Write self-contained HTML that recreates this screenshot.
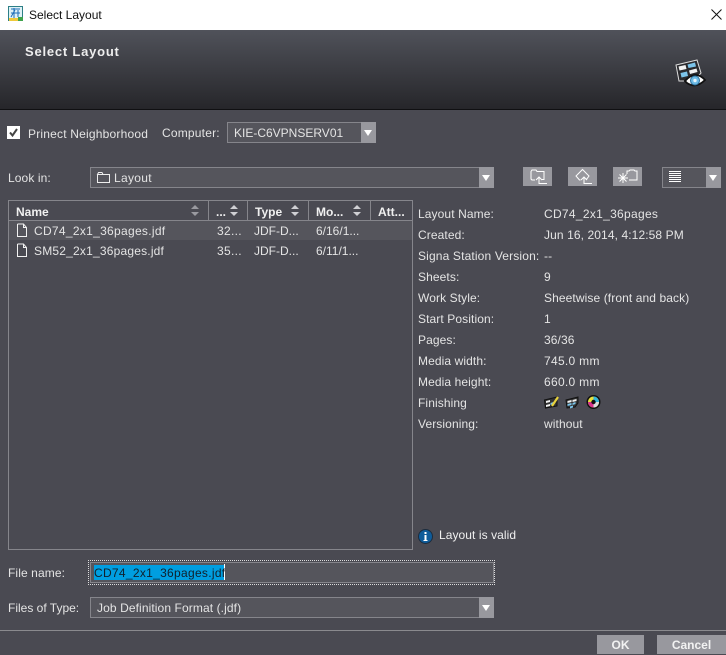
<!DOCTYPE html>
<html><head><meta charset="utf-8">
<style>
html,body{margin:0;padding:0}
body{width:726px;height:654px;position:relative;overflow:hidden;background:#4a4a52;font-family:"Liberation Sans",sans-serif;font-size:12px;color:#e4e4e4;letter-spacing:.1px}
.a{position:absolute;white-space:nowrap;line-height:14px}
.b{position:absolute;box-sizing:border-box}
.l{letter-spacing:.3px}
.box{position:absolute;box-sizing:border-box;background:#55555c;border:1px solid #85858b}
.arr{position:absolute;background:#98989e;width:15px}
.arr:after{content:"";position:absolute;left:3px;top:50%;margin-top:-3px;border-left:4.5px solid transparent;border-right:4.5px solid transparent;border-top:6px solid #fff}
.tb{position:absolute;top:167px;width:29px;height:19px;background:#98989e}
.tb svg{position:absolute;left:0;top:0}
.h{font-weight:bold;color:#f0f0f0;letter-spacing:0}
.sort{position:absolute;top:203px;width:10px;height:15px}
.dv{position:absolute;top:201px;width:1px;height:19px;background:#85858b}
</style></head><body>

<div class="b" style="left:0;top:0;width:726px;height:30px;background:#fff"></div>
<svg class="b" style="left:8px;top:6px" width="16" height="16" viewBox="0 0 16 16"><rect x=".5" y=".5" width="14" height="14" fill="#dff2f6" stroke="#2d7f86"/><rect x="1" y="12" width="9" height="3" fill="#f0c93a"/><rect x="10" y="11" width="5" height="4" fill="#3fa34d"/><path d="M3 3h9M3 7h9M6 2v10M10 4v7M3 11l4-7" stroke="#1f6fb8" fill="none"/></svg>
<div class="a" style="left:29px;top:8px;color:#111;letter-spacing:0">Select Layout</div>
<svg class="b" style="left:711px;top:9px" width="11" height="11" viewBox="0 0 11 11"><path d="M.5.5l10 10M10.500.5l-10 10" stroke="#111" fill="none"/></svg>

<div class="b" style="left:0;top:30px;width:726px;height:79px;background:linear-gradient(#50525a,#26262a)"></div>
<div class="b" style="left:0;top:109px;width:726px;height:1px;background:#101012"></div>
<div class="a" style="left:25px;top:45px;font-weight:bold;font-size:13px;letter-spacing:.78px;color:#eee">Select Layout</div>
<svg class="b" style="left:673px;top:57px" width="34" height="32" viewBox="0 0 34 32">
<path d="M3 8L24 3 28 16 21 24 6 24z" fill="#2a2a2e" stroke="#ddd" stroke-width="1"/>
<path d="M5.500 9.500L12.500 8 13.500 12 6.500 13.500zM16 13.500L23.500 11.500 24.500 15 17 17z" fill="#f2f2f2"/>
<path d="M14.500 7.500L22 5.500 23 9.500 15.500 11zM7.500 16L14 14.500 15 19 8.500 20.500z" fill="#7cc4ea"/>
<path d="M12 24q9-10 18-3 2 2 2 2-9 9-18 3z" fill="#fff" stroke="#111" stroke-width="1.800"/>
<circle cx="22" cy="23.500" r="4.500" fill="#6dbbe6" stroke="#2a6f9c"/><circle cx="22" cy="23.500" r="1.700" fill="#e6f5fc"/>
</svg>

<div class="b" style="left:7px;top:126px;width:13px;height:13px;background:#fff"></div>
<svg class="b" style="left:7px;top:126px" width="13" height="13" viewBox="0 0 13 13"><path d="M3 6.500l2.500 3L10 3" stroke="#444" stroke-width="2" fill="none"/></svg>
<div class="a" style="left:28px;top:127px;letter-spacing:.2px">Prinect Neighborhood</div>
<div class="a" style="left:162px;top:126px;letter-spacing:.2px">Computer:</div>
<div class="box" style="left:227px;top:122px;width:149px;height:21px"></div>
<div class="a" style="left:234px;top:126px;letter-spacing:0">KIE-C6VPNSERV01</div>
<div class="arr" style="left:361px;top:122px;height:21px"></div>

<div class="a" style="left:8px;top:171px">Look in:</div>
<div class="box" style="left:90px;top:167px;width:404px;height:21px"></div>
<svg class="b" style="left:96px;top:171px" width="15" height="13" viewBox="0 0 15 13"><path d="M1.500 3.500V11.500H13.500V3.500H7L6 1.500H2.500L1.500 3.500H7" fill="none" stroke="#eee"/></svg>
<div class="a" style="left:114px;top:171px;letter-spacing:.3px">Layout</div>
<div class="arr" style="left:479px;top:167px;height:21px"></div>

<div class="tb" style="left:523px"><svg width="29" height="19" viewBox="0 0 29 19"><path d="M12 13H9.500Q8 13 8 11.500V4.500L9 3H13L14 4.500H21V12.500H19M13 13L16 10 19 13M16 10V16.500H24" fill="none" stroke="#fff"/></svg></div>
<div class="tb" style="left:568px"><svg width="29" height="19" viewBox="0 0 29 19"><path d="M12.500 13H11.500L8 9 14.500 2.500 21 9 18 13M13 13L16 10 19 13M16 10V16.500H24" fill="none" stroke="#fff"/></svg></div>
<div class="tb" style="left:613px"><svg width="29" height="19" viewBox="0 0 29 19"><path d="M14 7V4H16L17 3H21L22 4H24V13H16M5 11H15M10 6V16M6.500 7.500L13.500 14.500M13.500 7.500L6.500 14.500" fill="none" stroke="#fff"/></svg></div>
<div class="box" style="left:662px;top:167px;width:59px;height:21px"></div>
<svg class="b" style="left:669px;top:171px" width="12" height="12" viewBox="0 0 12 12"><path d="M0 .500h12M0 2.500h12M0 4.500h12M0 6.500h12M0 8.500h12M0 10.500h12" stroke="#fff"/></svg>
<div class="arr" style="left:706px;top:167px;height:21px"></div>

<div class="b" style="left:8px;top:200px;width:405px;height:350px;border:1px solid #85858b;background:#4a4a52"></div>
<div class="b" style="left:9px;top:220px;width:403px;height:1px;background:#85858b"></div>
<div class="b" style="left:9px;top:221px;width:403px;height:19px;background:#55555c"></div>
<div class="dv" style="left:208px"></div><div class="dv" style="left:247px"></div><div class="dv" style="left:308px"></div><div class="dv" style="left:370px"></div>
<div class="a h" style="left:16px;top:205px">Name</div>
<div class="a h" style="left:216px;top:205px">...</div>
<div class="a h" style="left:255px;top:205px">Type</div>
<div class="a h" style="left:316px;top:205px">Mo...</div>
<div class="a h" style="left:378px;top:205px">Att...</div>
<svg class="sort" style="left:190px" viewBox="0 0 10 15"><path d="M1 6l4-4 4 4zM1 9l4 4 4-4z" fill="#9a9aa0"/></svg>
<svg class="sort" style="left:229px" viewBox="0 0 10 15"><path d="M1 6l4-4 4 4zM1 9l4 4 4-4z" fill="#d0d0d4"/></svg>
<svg class="sort" style="left:290px" viewBox="0 0 10 15"><path d="M1 6l4-4 4 4zM1 9l4 4 4-4z" fill="#d0d0d4"/></svg>
<svg class="sort" style="left:352px" viewBox="0 0 10 15"><path d="M1 6l4-4 4 4zM1 9l4 4 4-4z" fill="#d0d0d4"/></svg>

<svg class="b" style="left:16px;top:223px" width="12" height="15" viewBox="0 0 12 15"><path d="M1.500 1V13.500H10.500V4.500L7.500 1H1.500M7.500 1V4.500H10.500" fill="none" stroke="#f2f2f2"/></svg>
<div class="a l" style="left:34px;top:224px">CD74_2x1_36pages.jdf</div>
<div class="a l" style="left:217px;top:224px">32...</div>
<div class="a" style="left:254px;top:224px;letter-spacing:0">JDF-D...</div>
<div class="a" style="left:316px;top:224px;letter-spacing:0">6/16/1...</div>
<svg class="b" style="left:16px;top:243px" width="12" height="15" viewBox="0 0 12 15"><path d="M1.500 1V13.500H10.500V4.500L7.500 1H1.500M7.500 1V4.500H10.500" fill="none" stroke="#f2f2f2"/></svg>
<div class="a l" style="left:34px;top:244px;letter-spacing:.2px">SM52_2x1_36pages.jdf</div>
<div class="a l" style="left:217px;top:244px">35...</div>
<div class="a" style="left:254px;top:244px;letter-spacing:0">JDF-D...</div>
<div class="a" style="left:316px;top:244px;letter-spacing:0">6/11/1...</div>

<div class="a" style="left:418px;top:207px">Layout Name:</div><div class="a l" style="left:544px;top:207px">CD74_2x1_36pages</div>
<div class="a" style="left:418px;top:228px">Created:</div><div class="a" style="left:544px;top:228px">Jun 16, 2014, 4:12:58 PM</div>
<div class="a" style="left:418px;top:249px;letter-spacing:.15px">Signa Station Version:</div><div class="a" style="left:544px;top:249px">--</div>
<div class="a" style="left:418px;top:270px">Sheets:</div><div class="a" style="left:544px;top:270px">9</div>
<div class="a" style="left:418px;top:291px">Work Style:</div><div class="a" style="left:544px;top:291px">Sheetwise (front and back)</div>
<div class="a" style="left:418px;top:312px">Start Position:</div><div class="a" style="left:544px;top:312px">1</div>
<div class="a" style="left:418px;top:333px">Pages:</div><div class="a" style="left:544px;top:333px">36/36</div>
<div class="a" style="left:418px;top:354px">Media width:</div><div class="a l" style="left:544px;top:354px">745.0 mm</div>
<div class="a" style="left:418px;top:375px">Media height:</div><div class="a l" style="left:544px;top:375px">660.0 mm</div>
<div class="a" style="left:418px;top:396px">Finishing</div>
<svg class="b" style="left:543px;top:394px" width="60" height="16" viewBox="0 0 60 16">
<path d="M1.500 6L14 3V12L2.500 14z" fill="#333" stroke="#111"/><path d="M3 7l4-1v2l-4 1zM3 11l4-1v2l-4 1z" fill="#f2f2f2"/><path d="M7.500 9l3-1v2l-3 1z" fill="#7cc4ea"/><path d="M9 12L15 3" stroke="#e8d23c" stroke-width="2.200"/>
<path d="M23 6L35 3V9L32 13 24 14z" fill="#333" stroke="#111"/><path d="M24.500 7l4-1v2l-4 1zM29.500 6l4-1v2l-4 1z" fill="#f2f2f2"/><path d="M24.500 10l4-1v2l-4 1zM29.500 9l3-1v2l-3 1zM27 12.500l3-1v2l-3 1z" fill="#7cc4ea"/>
<circle cx="50.500" cy="8" r="7" fill="#111"/><circle cx="50.500" cy="8" r="5.500" fill="#e8e03c"/><path d="M50.500 8V2.500A5.500 5.500 0 0 1 56 8z" fill="#35b6dc"/><path d="M50.500 8H56A5.500 5.500 0 0 1 50.500 13.500z" fill="#ddd"/><path d="M50.500 8V13.500A5.500 5.500 0 0 1 45 8z" fill="#d8328c"/><circle cx="50.500" cy="8" r="2.200" fill="#111"/>
</svg>
<div class="a" style="left:418px;top:417px">Versioning:</div><div class="a" style="left:544px;top:417px">without</div>

<svg class="b" style="left:418px;top:529px" width="15" height="15" viewBox="0 0 15 15"><circle cx="7.500" cy="7.500" r="7" fill="#0f5c9a" stroke="#1b2c3e"/><rect x="6.500" y="3" width="2" height="2" fill="#fff"/><rect x="6.500" y="6" width="2" height="5" fill="#fff"/><rect x="5.500" y="11" width="4" height="1" fill="#fff"/></svg>
<div class="a" style="left:439px;top:528px;color:#f0f0f0;letter-spacing:.07px">Layout is valid</div>

<div class="a" style="left:8px;top:566px">File name:</div>
<div class="b" style="left:88px;top:560px;width:407px;height:25px;border:1px dotted #ddd"></div>
<div class="box" style="left:90px;top:562px;width:404px;height:21px"></div>
<div class="b" style="left:94px;top:565px;width:130px;height:15px;background:#009ee0"></div>
<div class="b" style="left:224px;top:564px;width:1px;height:16px;background:#fff"></div>
<div class="a l" style="left:94px;top:566px;color:#10202c">CD74_2x1_36pages.jdf</div>

<div class="a" style="left:8px;top:601px;letter-spacing:0">Files of Type:</div>
<div class="box" style="left:90px;top:597px;width:404px;height:21px"></div>
<div class="a" style="left:97px;top:601px">Job Definition Format (.jdf)</div>
<div class="arr" style="left:479px;top:597px;height:21px"></div>

<div class="b" style="left:0;top:630px;width:726px;height:1px;background:#8a8a8e"></div>
<div class="b" style="left:597px;top:635px;width:47px;height:19px;background:#98989e;color:#f2f2f2;font-weight:bold;text-align:center;line-height:20px;letter-spacing:0">OK</div>
<div class="b" style="left:657px;top:635px;width:69px;height:19px;background:#98989e;color:#f2f2f2;font-weight:bold;text-align:center;line-height:20px;letter-spacing:0">Cancel</div>
</body></html>
